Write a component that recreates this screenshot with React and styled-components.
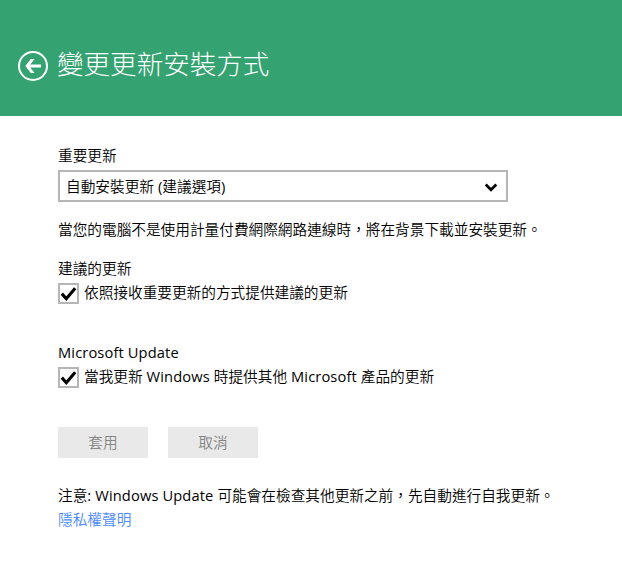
import React, { useState } from "react";
import styled, { createGlobalStyle } from "styled-components";

const GlobalStyle = createGlobalStyle`
  body {
    margin: 0;
    background-color: #ffffff;
    color: #000000;
    font-family: "Noto Sans CJK TC", sans-serif;
    font-size: 14.667px;
    font-weight: 350;
    line-height: 20px;
  }
`;

const BackIcon = () => (
  <svg width="30" height="30" viewBox="0 0 30 30" fill="none">
    <circle cx="15" cy="15" r="14" stroke="#ffffff" strokeWidth="2" />
    <path
      d="M7.3 15L12.8 8H16.6L12.2 13.6H23V16.4H12.2L16.6 22H12.8Z"
      fill="#ffffff"
    />
  </svg>
);

const Chevron = () => (
  <svg width="12" height="9" viewBox="0 0 12 9" fill="none">
    <path d="M0.7 1.6L6 6.7L11.3 1.6" stroke="#000000" strokeWidth="2.8" />
  </svg>
);

const CheckMark = () => (
  <svg width="17" height="17" viewBox="0 0 17 17" fill="none">
    <path d="M1.8 8.6L6.3 13.7L15.2 3.2" stroke="#000000" strokeWidth="3.1" />
  </svg>
);

const CheckOption = ({ children }) => {
  const [checked, setChecked] = useState(true);

  return (
    <OptionRow>
      <CheckBox
        type="button"
        role="checkbox"
        aria-checked={checked}
        onClick={() => setChecked(!checked)}
      >
        {checked ? <CheckMark /> : null}
      </CheckBox>
      <OptionText>{children}</OptionText>
    </OptionRow>
  );
};

const App = () => {
  return (
    <>
      <GlobalStyle />
      <Header>
        <BackButton aria-label="返回">
          <BackIcon />
        </BackButton>
        <Title>變更更新安裝方式</Title>
      </Header>

      <Content>
        <Text>重要更新</Text>
        <Select type="button">
          <Text>自動安裝更新<Latin> (</Latin>建議選項<Latin>)</Latin></Text>
          <Chevron />
        </Select>
        <Text>當您的電腦不是使用計量付費網際網路連線時，將在背景下載並安裝更新。</Text>

        <Section $top={19}>
          <Text>建議的更新</Text>
          <CheckOption>依照接收重要更新的方式提供建議的更新</CheckOption>
        </Section>

        <Section $top={38}>
          <Text><Latin>Microsoft Update</Latin></Text>
          <CheckOption>
            當我更新<Latin> Windows </Latin>時提供其他<Latin> Microsoft </Latin>產品的更新
          </CheckOption>
        </Section>

        <Buttons>
          <Button disabled>套用</Button>
          <Button disabled>取消</Button>
        </Buttons>

        <Text>
          注意<Latin>: Windows Update </Latin>可能會在檢查其他更新之前，先自動進行自我更新。
        </Text>
        <PrivacyLink href="#">隱私權聲明</PrivacyLink>
      </Content>
    </>
  );
};

export default App;

const Header = styled.header`
  display: flex;
  align-items: flex-start;
  gap: 9px;
  height: 116px;
  padding: 43px 18px 0;
  box-sizing: border-box;
  background-color: #35a371;
`;

const BackButton = styled.button`
  display: flex;
  margin-top: 8px;
  padding: 0;
  border: none;
  background: none;
  cursor: pointer;
`;

const Title = styled.h1`
  margin: 0;
  color: #ffffff;
  font-size: 26.55px;
  font-weight: 300;
  line-height: 39px;
`;

const Content = styled.main`
  display: flex;
  flex-direction: column;
  align-items: flex-start;
  padding: 29px 58px 0;
`;

const Text = styled.div`
  white-space: nowrap;
`;

const OptionText = styled(Text)`
  margin-top: -1px;
`;

const Latin = styled.span`
  font-family: "Open Sans", sans-serif;
  font-weight: 400;
  letter-spacing: 0.13px;
  white-space: pre;
`;

const Select = styled.button`
  display: flex;
  align-items: center;
  justify-content: space-between;
  width: 450px;
  height: 32px;
  margin: 5px 0 17px;
  padding: 0 9px 0 6px;
  box-sizing: border-box;
  border: 2px solid #b6b6b6;
  background-color: #ffffff;
  color: #000000;
  font-family: inherit;
  font-size: 14.667px;
  font-weight: inherit;
  line-height: 20px;

  svg {
    margin-top: 3px;
  }
`;

const Section = styled.section`
  margin-top: ${(props) => props.$top}px;
`;

const OptionRow = styled.div`
  display: flex;
  align-items: flex-start;
  gap: 5px;
  height: 21px;
  margin-top: 5px;
`;

const CheckBox = styled.button`
  display: flex;
  width: 21px;
  height: 21px;
  padding: 0;
  box-sizing: border-box;
  border: 2px solid #b6b6b6;
  background-color: #ffffff;
`;

const Buttons = styled.div`
  display: flex;
  gap: 20px;
  margin: 39px 0 27px;
`;

const Button = styled.button`
  width: 90px;
  height: 31px;
  padding: 0 0 2px;
  border: none;
  background-color: #e9e9e9;
  color: #858585;
  font-family: inherit;
  font-size: 14.667px;
  font-weight: inherit;
  line-height: 20px;
`;

const PrivacyLink = styled.a`
  margin-top: 4px;
  color: #4c8bff;
  text-decoration: none;
`;
